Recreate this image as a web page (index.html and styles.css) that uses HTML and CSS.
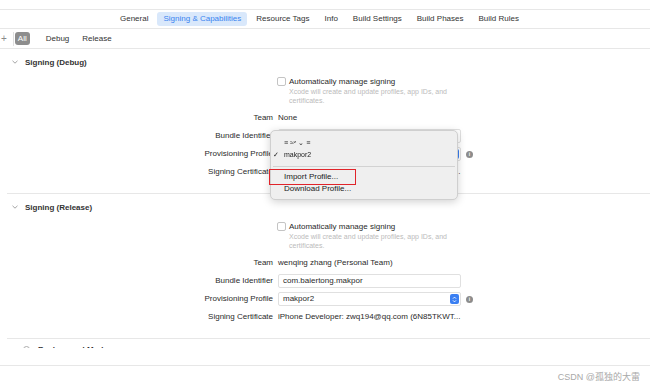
FILE: index.html
```html
<!DOCTYPE html>
<html lang="en">
<head>
    <meta charset="UTF-8">
    <meta name="viewport" content="width=device-width, initial-scale=1.0">
    <title>Signing &amp; Capabilities</title>
    <link rel="stylesheet" href="styles.css">
</head>
<body>

    <div class="top-gap"></div>

    <div class="tabbar">
        <span class="tab">General</span>
        <span class="tab active">Signing &amp; Capabilities</span>
        <span class="tab">Resource Tags</span>
        <span class="tab">Info</span>
        <span class="tab">Build Settings</span>
        <span class="tab">Build Phases</span>
        <span class="tab">Build Rules</span>
    </div>

    <div class="filterbar">
        <span class="plus">+</span>
        <span class="divider"></span>
        <span class="pill">All</span>
        <span class="filter first">Debug</span>
        <span class="filter">Release</span>
    </div>

    <div class="main">
        <div class="section">
            <div class="section-head">
                <svg class="chevron" width="6" height="4" viewBox="0 0 6 4"><path d="M0.5 0.8 L3 3.2 L5.5 0.8" fill="none" stroke="#9a9a9a" stroke-width="0.9"/></svg>
                Signing (Debug)
            </div>
            <div class="form">
                <div></div>
                <div class="auto">
                    <div class="check-row"><span class="checkbox"></span>Automatically manage signing</div>
                    <div class="hint">Xcode will create and update profiles, app IDs, and<br>certificates.</div>
                </div>

                <div class="label">Team</div>
                <div class="value">None</div>

                <div class="label">Bundle Identifier</div>
                <div class="value"><div class="field">com.baiertong.makpor</div></div>

                <div class="label">Provisioning Profile</div>
                <div class="value">
                    <div class="field select">makpor2
                        <span class="stepper"><svg width="5" height="7" viewBox="0 0 5 7"><path d="M1 2.6 L2.5 1.1 L4 2.6 M1 4.4 L2.5 5.9 L4 4.4" fill="none" stroke="#fff" stroke-width="0.9"/></svg></span>
                    </div>
                    <span class="info">i</span>
                </div>

                <div class="label">Signing Certificate</div>
                <div class="value">iPhone Developer: zwq194@qq.com (6N85TKWT...</div>
            </div>
        </div>

        <div class="section">
            <div class="section-head">
                <svg class="chevron" width="6" height="4" viewBox="0 0 6 4"><path d="M0.5 0.8 L3 3.2 L5.5 0.8" fill="none" stroke="#9a9a9a" stroke-width="0.9"/></svg>
                Signing (Release)
            </div>
            <div class="form">
                <div></div>
                <div class="auto">
                    <div class="check-row"><span class="checkbox"></span>Automatically manage signing</div>
                    <div class="hint">Xcode will create and update profiles, app IDs, and<br>certificates.</div>
                </div>

                <div class="label">Team</div>
                <div class="value">wenqing zhang (Personal Team)</div>

                <div class="label">Bundle Identifier</div>
                <div class="value"><div class="field">com.baiertong.makpor</div></div>

                <div class="label">Provisioning Profile</div>
                <div class="value">
                    <div class="field select">makpor2
                        <span class="stepper"><svg width="5" height="7" viewBox="0 0 5 7"><path d="M1 2.6 L2.5 1.1 L4 2.6 M1 4.4 L2.5 5.9 L4 4.4" fill="none" stroke="#fff" stroke-width="0.9"/></svg></span>
                    </div>
                    <span class="info">i</span>
                </div>

                <div class="label">Signing Certificate</div>
                <div class="value">iPhone Developer: zwq194@qq.com (6N85TKWT...</div>
            </div>
        </div>

        <div class="section last">
            <div class="section-head">
                <span class="circle"></span>
                Background Modes
            </div>
        </div>
    </div>

    <div class="bottombar"></div>
    <div class="watermark">CSDN @孤独的大雷</div>

    <!-- profile menu opened over the Debug section -->
    <div class="menu">
        <div class="menu-item blurred">≡ ≈ᶻ ⌄ ≡</div>
        <div class="menu-item blurred"><span class="tick">✓</span>makpor2</div>
        <div class="menu-sep"></div>
        <div class="menu-item marked">Import Profile...</div>
        <div class="menu-item">Download Profile...</div>
    </div>

</body>
</html>
```

FILE: styles.css
```css
body {
    margin: 0;
    width: 650px;
    height: 391px;
    overflow: hidden;
    position: relative;
    font-family: "Liberation Sans", Arial, sans-serif;
    font-size: 8px;
    color: #2a2a2a;
    background-color: #fff;
}
.top-gap {
    height: 9px;
    border-bottom: 1px solid #e7e7e7;
}
.tabbar {
    height: 18px;
    display: flex;
    align-items: center;
    gap: 3px;
    padding-left: 114px;
    border-bottom: 1px solid #e7e7e7;
}
.tab {
    padding: 0 6px;
    line-height: 14px;
    border-radius: 3px;
    color: #333;
}
.tab.active {
    background-color: #d9e8fb;
    color: #3a84f0;
}
.filterbar {
    height: 19px;
    display: flex;
    align-items: center;
    border-bottom: 1px solid #e7e7e7;
}
.plus {
    padding-left: 1px;
    font-size: 10px;
    color: #8a8a8a;
}
.divider {
    width: 1px;
    height: 14px;
    margin-left: 6px;
    background-color: #e0e0e0;
}
.pill {
    margin-left: 1px;
    padding: 0 3px;
    line-height: 13px;
    border-radius: 3px;
    background-color: #8d8d8d;
    color: #fff;
}
.filter {
    margin-left: 13px;
    color: #333;
}
.filter.first {
    margin-left: 16px;
}
.main {
    height: 299px;
    overflow: hidden;
}
.section {
    margin-left: 7px;
    padding: 7px 0 12px;
    border-bottom: 1px solid #e7e7e7;
}
.section.last {
    padding-top: 4px;
}
.section-head {
    height: 12px;
    display: flex;
    align-items: center;
    padding-left: 5px;
    font-weight: bold;
    color: #333;
}
.chevron {
    margin-right: 7px;
}
.circle {
    width: 5px;
    height: 5px;
    margin: 0 8px 0 11px;
    border: 1px solid #aaa;
    border-radius: 50%;
}
.form {
    display: grid;
    grid-template-columns: 266px 1fr;
    column-gap: 5px;
    margin-top: 8px;
}
.check-row {
    display: flex;
    align-items: center;
    line-height: 11px;
}
.checkbox {
    width: 7px;
    height: 7px;
    margin: 0 3px 0 -1px;
    border: 1px solid #c4c4c4;
    border-radius: 2px;
}
.hint {
    padding-left: 11px;
    margin-bottom: 4px;
    font-size: 7px;
    line-height: 9px;
    color: #bbb;
}
.label {
    text-align: right;
    line-height: 18px;
}
.value {
    display: flex;
    align-items: center;
    line-height: 18px;
}
.field {
    width: 183px;
    height: 14px;
    box-sizing: border-box;
    padding-left: 4px;
    line-height: 12px;
    border: 1px solid #e0e0e0;
    border-radius: 2px;
}
.select {
    display: flex;
    justify-content: space-between;
    align-items: center;
    padding-right: 1px;
}
.stepper {
    width: 9px;
    height: 10px;
    display: flex;
    align-items: center;
    justify-content: center;
    border-radius: 2px;
    background-color: #3a7ff2;
}
.info {
    width: 7px;
    height: 7px;
    margin-left: 5px;
    border-radius: 50%;
    background-color: #8c8c8c;
    color: #fff;
    font-size: 5px;
    font-weight: bold;
    line-height: 7px;
    text-align: center;
}
.bottombar {
    height: 17px;
    border-bottom: 1px solid #e7e7e7;
}
.watermark {
    margin-top: 6px;
    padding-right: 10px;
    text-align: right;
    font-family: "Liberation Sans", "Noto Sans CJK SC", sans-serif;
    font-size: 9px;
    line-height: 11px;
    color: #a9a9a9;
}
.menu {
    position: absolute;
    left: 270px;
    top: 130px;
    width: 188px;
    height: 70px;
    box-sizing: border-box;
    padding-top: 6px;
    border: 1px solid #cfcfcf;
    border-radius: 5px;
    background-color: #efefef;
    box-shadow: 0 2px 8px rgba(0, 0, 0, 0.18);
}
.menu-item {
    position: relative;
    padding-left: 13px;
    line-height: 12px;
    color: #222;
}
.blurred {
    font-size: 7px;
    filter: blur(0.4px);
}
.tick {
    position: absolute;
    left: 2px;
}
.menu-sep {
    height: 1px;
    margin: 5px 2px 4px;
    background-color: #d2d2d2;
}
.menu-item.marked {
    width: 83px;
    box-sizing: border-box;
    outline: 1.5px solid #e0242a;
    outline-offset: 1px;
}
```
